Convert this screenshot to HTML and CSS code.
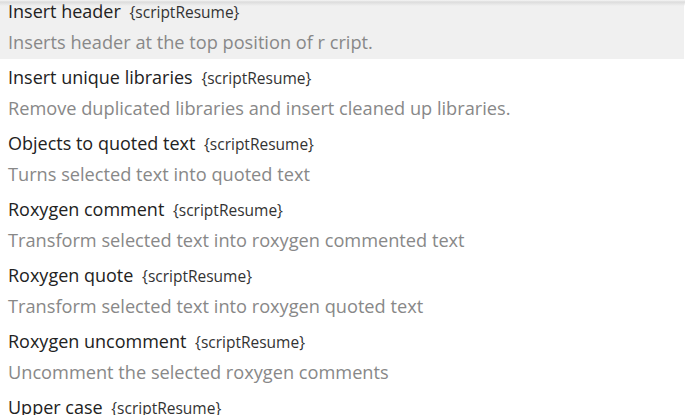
FILE: index.html
```html
<!DOCTYPE html>
<html>
<head>
<meta charset="utf-8">
<link rel="stylesheet" href="styles.css">
</head>
<body>
<div class="list">
  <div class="item selected">
    <div class="title">Insert header <span class="pkg">{scriptResume}</span></div>
    <div class="desc">Inserts header at the top position of r cript.</div>
  </div>
  <div class="item">
    <div class="title">Insert unique libraries <span class="pkg">{scriptResume}</span></div>
    <div class="desc">Remove duplicated libraries and insert cleaned up libraries.</div>
  </div>
  <div class="item">
    <div class="title">Objects to quoted text <span class="pkg">{scriptResume}</span></div>
    <div class="desc">Turns selected text into quoted text</div>
  </div>
  <div class="item">
    <div class="title">Roxygen comment <span class="pkg">{scriptResume}</span></div>
    <div class="desc">Transform selected text into roxygen commented text</div>
  </div>
  <div class="item">
    <div class="title">Roxygen quote <span class="pkg">{scriptResume}</span></div>
    <div class="desc">Transform selected text into roxygen quoted text</div>
  </div>
  <div class="item">
    <div class="title">Roxygen uncomment <span class="pkg">{scriptResume}</span></div>
    <div class="desc">Uncomment the selected roxygen comments</div>
  </div>
  <div class="item last">
    <div class="title">Upper case <span class="pkg">{scriptResume}</span></div>
  </div>
</div>
<div class="shadow"></div>
</body>
</html>
```
FILE: styles.css
```css
html, body {
  margin: 0;
  padding: 0;
  background: #ffffff;
  overflow: hidden;
  height: 415px;
}
body {
  font-family: "Open Sans", "Noto Sans", sans-serif;
  position: relative;
}
.list {
  display: flex;
  flex-direction: column;
  margin-top: -7px;
  margin-right: 1px;
}
.item {
  height: 66px;
  box-sizing: border-box;
  padding: 3px 8px 0 8px;
}
.item.last {
  height: auto;
}
.item.selected {
  background: #f0f0f0;
}
.title {
  font-size: 18px;
  line-height: 30px;
  color: #222;
  white-space: nowrap;
}
.pkg {
  font-size: 15.5px;
  color: #333;
  margin-left: 4px;
}
.desc {
  font-size: 18.2px;
  line-height: 30px;
  color: #888;
  white-space: nowrap;
}
.shadow {
  position: absolute;
  top: 0;
  left: 0;
  right: 0;
  height: 6px;
  background: linear-gradient(to bottom, #f6f6f6 0px, #dcdcdc 2px, rgba(220,220,220,0) 6px);
}
```
